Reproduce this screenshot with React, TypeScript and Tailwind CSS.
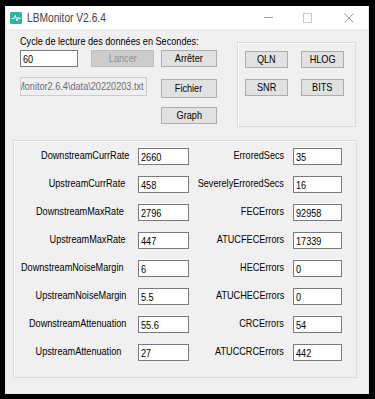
import React from 'react';

const leftRows = [
  { label: 'DownstreamCurrRate', value: '2660', pad: 'pr-[0px]' },
  { label: 'UpstreamCurrRate', value: '458', pad: 'pr-[4px]' },
  { label: 'DownstreamMaxRate', value: '2796', pad: 'pr-[5px]' },
  { label: 'UpstreamMaxRate', value: '447', pad: 'pr-[3px]' },
  { label: 'DownstreamNoiseMargin', value: '6', pad: 'pr-[6px]' },
  { label: 'UpstreamNoiseMargin', value: '5.5', pad: 'pr-[3px]' },
  { label: 'DownstreamAttenuation', value: '55.6', pad: 'pr-[3px]' },
  { label: 'UpstreamAttenuation', value: '27', pad: 'pr-[8px]' },
];

const rightRows = [
  { label: 'ErroredSecs', value: '35' },
  { label: 'SeverelyErroredSecs', value: '16' },
  { label: 'FECErrors', value: '92958' },
  { label: 'ATUCFECErrors', value: '17339' },
  { label: 'HECErrors', value: '0' },
  { label: 'ATUCHECErrors', value: '0' },
  { label: 'CRCErrors', value: '54' },
  { label: 'ATUCCRCErrors', value: '442' },
];

// the old WinForms font is narrower than Arial, squeeze it
const Narrow = ({ children, origin = 'origin-left' }: any) => (
  <span className={`inline-block whitespace-nowrap scale-x-[0.83] ${origin}`}>{children}</span>
);

const Btn = ({ children, className = '', disabled = false }: any) => (
  <div
    className={`flex items-center justify-center border leading-[13px] ${
      disabled ? 'bg-[#cccccc] border-[#bfbfbf] text-[#8f8f8f]' : 'bg-[#e1e1e1] border-[#adadad] text-black'
    } ${className}`}
  >
    <Narrow origin="origin-center">{children}</Narrow>
  </div>
);

const Field = ({ value, className = '' }: any) => (
  <div className={`h-[17px] bg-white border border-[#7a7a7a] pl-[2px] pt-[2px] leading-[13px] text-black ${className}`}>
    <Narrow>{value}</Narrow>
  </div>
);

const App: React.FC = () => {
  return (
    <div className="w-[375px] h-[399px] bg-black pt-[6px] pl-[5px] pr-[6px] pb-[5px] font-['Liberation_Sans',Arial,sans-serif] text-[11px]">
      <div className="h-full flex flex-col border-l border-r border-b border-[#e6e6e6]">
        {/* title bar */}
        <div className="h-[23px] bg-white flex items-center shrink-0">
          <svg width="12" height="12" viewBox="0 0 12 12" className="ml-[4px]">
            <rect x="0" y="0" width="12" height="12" rx="1.5" fill="#2db49e" />
            <polyline points="1.5,6.5 4,6.5 5.3,3.5 7,9 8.4,5 9.4,6.5 10.8,6.5" fill="none" stroke="#fff" strokeWidth="1" />
          </svg>
          <span className="ml-[5px] text-[12px] text-[#444] leading-[14px] inline-block whitespace-nowrap scale-x-[0.85] origin-left">LBMonitor V2.6.4</span>
          <div className="ml-auto flex items-center">
            <div className="w-[9px] h-px bg-[#9a9a9a] mr-[30px]" />
            <div className="w-[9px] h-[10px] border border-[#c8c8c8] mr-[32px]" />
            <svg width="10" height="10" viewBox="0 0 10 10" className="mr-[14px]">
              <path d="M0.5 0.5 L9.5 9.5 M9.5 0.5 L0.5 9.5" stroke="#9a9a9a" strokeWidth="1" />
            </svg>
          </div>
        </div>

        {/* body */}
        <div className="flex-1 bg-[#f0f0f0]">
          <div className="h-[111px] flex pl-[14px]">
            <div className="w-[197px] pt-[6px]">
              <div className="leading-[13px] text-black">
                <Narrow>Cycle de lecture des données en Secondes:</Narrow>
              </div>
              <div className="flex mt-[2px]">
                <Field value="60" className="w-[58px]" />
                <Btn disabled className="ml-[13px] w-[63px] h-[17px]">Lancer</Btn>
                <Btn className="ml-[7px] w-[56px] h-[17px]">Arrêter</Btn>
              </div>
              <div className="flex items-start mt-[10px]">
                <div className="w-[127px] h-[19px] border border-[#cccccc] bg-[#f0f0f0] flex justify-end items-center overflow-hidden pr-[2px] text-[#6d6d6d]">
                  <Narrow origin="origin-right">C:\Users\LBMonitor2.6.4\data\20220203.txt</Narrow>
                </div>
                <Btn className="ml-[14px] mt-[2px] w-[56px] h-[19px]">Fichier</Btn>
              </div>
              <Btn className="ml-[141px] mt-[9px] w-[56px] h-[17px]">Graph</Btn>
            </div>
            <div className="ml-[20px] mt-[13px] w-[119px] h-[85px] border border-[#dcdcdc] shadow-[inset_1px_1px_0_#fff] pl-[7px] pt-[8px]">
              <div className="grid grid-cols-[43px_43px] gap-x-[13px] gap-y-[11px]">
                <Btn className="h-[17px]">QLN</Btn>
                <Btn className="h-[17px]">HLOG</Btn>
                <Btn className="h-[17px]">SNR</Btn>
                <Btn className="h-[17px]">BITS</Btn>
              </div>
            </div>
          </div>

          <div className="ml-[7px] w-[344px] h-[238px] border border-[#dcdcdc] shadow-[inset_1px_1px_0_#fff] pt-[7px] flex flex-col gap-[11px]">
            {leftRows.map((r, i) => (
              <div key={r.label} className="flex h-[17px]">
                <div className={`w-[115px] flex justify-end leading-[13px] pt-[1px] text-black ${r.pad}`}>
                  <Narrow origin="origin-right">{r.label}</Narrow>
                </div>
                <Field value={r.value} className="ml-[9px] w-[51px]" />
                <div className="w-[95px] flex justify-end leading-[13px] pt-[1px] text-black">
                  <Narrow origin="origin-right">{rightRows[i].label}</Narrow>
                </div>
                <Field value={rightRows[i].value} className="ml-[9px] w-[49px]" />
              </div>
            ))}
          </div>
        </div>
      </div>
    </div>
  );
};

export default App;
